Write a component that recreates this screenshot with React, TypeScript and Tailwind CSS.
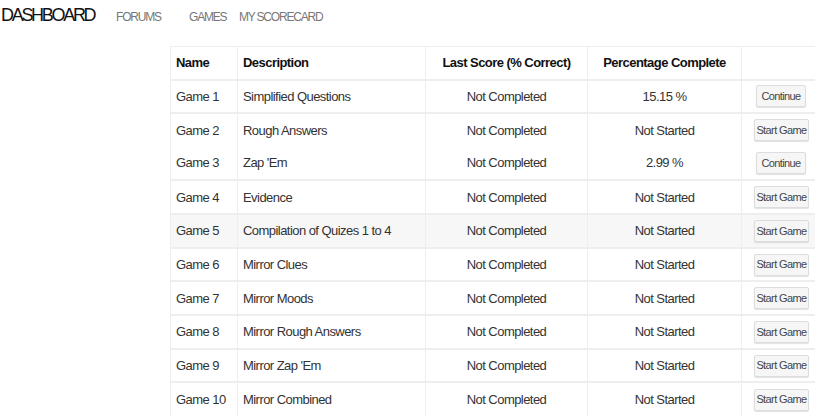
import React from 'react';

interface Game {
  name: string;
  description: string;
  lastScore: string;
  progress: string;
  action: 'Continue' | 'Start Game';
}

const games: Game[] = [
  { name: 'Game 1', description: 'Simplified Questions', lastScore: 'Not Completed', progress: '15.15 %', action: 'Continue' },
  { name: 'Game 2', description: 'Rough Answers', lastScore: 'Not Completed', progress: 'Not Started', action: 'Start Game' },
  { name: 'Game 3', description: "Zap 'Em", lastScore: 'Not Completed', progress: '2.99 %', action: 'Continue' },
  { name: 'Game 4', description: 'Evidence', lastScore: 'Not Completed', progress: 'Not Started', action: 'Start Game' },
  { name: 'Game 5', description: 'Compilation of Quizes 1 to 4', lastScore: 'Not Completed', progress: 'Not Started', action: 'Start Game' },
  { name: 'Game 6', description: 'Mirror Clues', lastScore: 'Not Completed', progress: 'Not Started', action: 'Start Game' },
  { name: 'Game 7', description: 'Mirror Moods', lastScore: 'Not Completed', progress: 'Not Started', action: 'Start Game' },
  { name: 'Game 8', description: 'Mirror Rough Answers', lastScore: 'Not Completed', progress: 'Not Started', action: 'Start Game' },
  { name: 'Game 9', description: "Mirror Zap 'Em", lastScore: 'Not Completed', progress: 'Not Started', action: 'Start Game' },
  { name: 'Game 10', description: 'Mirror Combined', lastScore: 'Not Completed', progress: 'Not Started', action: 'Start Game' },
];

const App: React.FC = () => {
  return (
    <div className="w-[815px] h-[419px] overflow-hidden bg-white text-[#333] font-['Liberation_Sans',Arial,sans-serif]">
      <nav className="flex items-baseline h-[34px] pt-[2px]">
        <span className="w-[116px] text-[18px] text-[#111] tracking-[-2.3px] pl-[1px]">DASHBOARD</span>
        <span className="w-[73px] text-[12px] text-[#777] tracking-[-1.2px]">FORUMS</span>
        <span className="w-[50px] text-[12px] text-[#777] tracking-[-1.2px]">GAMES</span>
        <span className="text-[12px] text-[#777] tracking-[-1.2px]">MY SCORECARD</span>
      </nav>
      <div className="pl-[170px] pt-[12px]">
        <table className="table-fixed border-collapse w-[660px] text-[13px] tracking-[-0.55px]">
          <colgroup>
            <col className="w-[67px]" />
            <col className="w-[188px]" />
            <col className="w-[162px]" />
            <col className="w-[154px]" />
            <col className="w-[89px]" />
          </colgroup>
          <thead>
            <tr className="h-[33px] border-t border-[#eee]">
              <th className="border-l border-r border-[#eee] px-[5px] text-left font-bold text-[#111]">Name</th>
              <th className="border-r border-[#eee] px-[5px] text-left font-bold text-[#111]">Description</th>
              <th className="border-r border-[#eee] px-[5px] text-center font-bold text-[#111]">Last Score (% Correct)</th>
              <th className="border-r border-[#eee] px-[5px] text-center font-bold text-[#111]">Percentage Complete</th>
              <th className="border-r border-[#eee]"></th>
            </tr>
          </thead>
          <tbody>
            {games.map((game, i) => (
              <tr
                key={game.name}
                className={`h-[33.67px] ${i === 2 ? '' : 'border-t-2'} border-[#eee] ${i === 4 ? 'bg-[#f7f7f7]' : ''}`}
              >
                <td className="border-l border-r border-[#eee] px-[5px]">{game.name}</td>
                <td className="border-r border-[#eee] px-[5px]">{game.description}</td>
                <td className="border-r border-[#eee] px-[5px] text-center">{game.lastScore}</td>
                <td className="border-r border-[#eee] px-[5px] text-center">{game.progress}</td>
                <td className="border-r border-[#eee] pl-[12px]">
                  <button
                    className={`h-[22px] ${game.action === 'Continue' ? 'w-[50px] ml-[2px]' : 'w-[55px]'} bg-[#f6f6f6] border border-[#ddd] rounded-[2px] shadow-[0_1px_1px_rgba(0,0,0,0.12)] text-[11px] text-[#444] tracking-[-0.6px]`}
                  >
                    {game.action}
                  </button>
                </td>
              </tr>
            ))}
          </tbody>
        </table>
      </div>
    </div>
  );
};

export default App;
